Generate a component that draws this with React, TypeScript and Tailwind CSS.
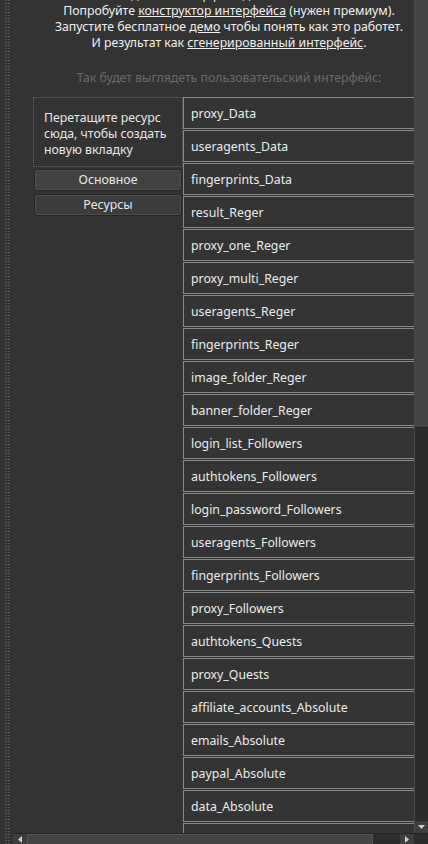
import React from 'react';

const tabs: string[] = [
  'proxy_Data',
  'useragents_Data',
  'fingerprints_Data',
  'result_Reger',
  'proxy_one_Reger',
  'proxy_multi_Reger',
  'useragents_Reger',
  'fingerprints_Reger',
  'image_folder_Reger',
  'banner_folder_Reger',
  'login_list_Followers',
  'authtokens_Followers',
  'login_password_Followers',
  'useragents_Followers',
  'fingerprints_Followers',
  'proxy_Followers',
  'authtokens_Quests',
  'proxy_Quests',
  'affiliate_accounts_Absolute',
  'emails_Absolute',
  'paypal_Absolute',
  'data_Absolute',
  '',
];

const Grip: React.FC = () => (
  <div className="w-[13px] shrink-0 flex gap-[1px] pl-[5px]">
    <div className="w-[2px] h-full bg-[repeating-linear-gradient(to_bottom,#5a5a5a_0_1px,transparent_1px_3px)]" />
    <div className="w-[2px] h-full bg-[repeating-linear-gradient(to_bottom,#5a5a5a_0_1px,transparent_1px_3px)]" />
  </div>
);

const App: React.FC = () => {
  return (
    <div className="w-[428px] h-[844px] overflow-hidden bg-[#333333] flex text-[12.3px] leading-4 font-['Noto_Sans',sans-serif]">
      <Grip />
      <div className="flex-1 flex flex-col min-w-0">
        <div className="flex-1 flex min-h-0">
          {/* scrolled content */}
          <div className="flex-1 overflow-hidden">
            <div className="w-[432px] -mt-[13px]">
              <div className="text-center text-[#f0f0f0]">
                <p>Вы можете сделать интерфейс для своего шаблона сами.</p>
                <p>
                  Попробуйте <span className="underline">конструктор интерфейса</span> (нужен премиум).
                </p>
                <p>
                  Запустите бесплатное <span className="underline">демо</span> чтобы понять как это работет.
                </p>
                <p>
                  И результат как <span className="underline">сгенерированный интерфейс</span>.
                </p>
              </div>
              <p className="mt-[19px] text-center text-[#6a6a6a]">Так будет выглядеть пользовательский интерфейс:</p>

              <div className="mt-[11px] flex pl-[20px]">
                <div className="w-[150px] shrink-0 flex flex-col gap-[2px]">
                  <div className="h-[70px] border border-dotted border-[#666] pl-[10px] pt-[12px] text-[#e8e8e8]">
                    Перетащите ресурс сюда, чтобы создать новую вкладку
                  </div>
                  <button className="h-[22px] mx-[1px] rounded-[3px] border border-[#262626] bg-[#424242] text-[#e8e8e8] shadow-[inset_0_0_0_1px_#505050]">
                    Основное
                  </button>
                  <button className="h-[22px] mx-[1px] mt-[1px] rounded-[3px] border border-[#262626] bg-[#3c3c3c] text-[#e8e8e8] shadow-[inset_0_0_0_1px_#4c4c4c]">
                    Ресурсы
                  </button>
                </div>
                <div className="flex-1 flex flex-col gap-[1px]">
                  {tabs.map((t, i) => (
                    <div
                      key={i}
                      className="h-[32px] shrink-0 border border-[#8a8a8a] bg-[#343434] pl-[7px] pt-[2px] flex items-center text-[#ececec]"
                    >
                      {t}
                    </div>
                  ))}
                </div>
              </div>
            </div>
          </div>

          {/* vertical scrollbar */}
          <div className="w-[14px] shrink-0 flex flex-col bg-[#2c2c2c] border-l border-[#4a4a4a]">
            <div className="h-[428px] bg-[#444444] border-b border-[#262626]" />
            <div className="flex-1" />
            <div className="h-[13px] flex items-center justify-center bg-[#3e3e3e] border-t border-[#262626]">
              <svg width="7" height="4" viewBox="0 0 7 4">
                <path d="M0 0H7L3.5 4Z" fill="#cfcfcf" />
              </svg>
            </div>
          </div>
        </div>

        {/* horizontal scrollbar */}
        <div className="h-[11px] shrink-0 flex bg-[#2c2c2c] border-t border-[#262626]">
          <div className="w-[14px] flex items-start justify-center pt-[2px] bg-[#3e3e3e]">
            <svg width="4" height="7" viewBox="0 0 4 7">
              <path d="M4 0V7L0 3.5Z" fill="#cfcfcf" />
            </svg>
          </div>
          <div className="w-[346px] bg-[#444444] border border-[#555] border-b-0" />
          <div className="flex-1" />
          <div className="w-[14px] flex items-start justify-center pt-[2px] bg-[#3e3e3e]">
            <svg width="4" height="7" viewBox="0 0 4 7">
              <path d="M0 0V7L4 3.5Z" fill="#cfcfcf" />
            </svg>
          </div>
          <div className="w-[14px] bg-[#2c2c2c]" />
        </div>
      </div>
    </div>
  );
};

export default App;
